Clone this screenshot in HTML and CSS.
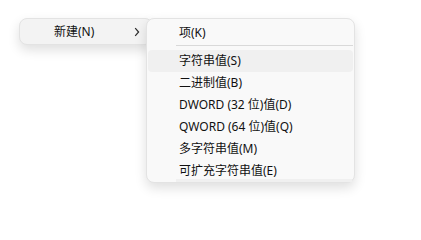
FILE: index.html
```html
<!DOCTYPE html>
<html lang="zh-CN">
<head>
<meta charset="utf-8">
<link rel="stylesheet" href="styles.css">
</head>
<body>
<div class="stage">
  <div class="menu main">
    <div class="main-item">
      <span class="label">新建(N)</span>
      <svg class="chev" width="6" height="10" viewBox="0 0 6 10"><path d="M1.2 1.2 L4.6 5 L1.2 8.8" fill="none" stroke="#2b2b2b" stroke-width="1.2"/></svg>
    </div>
    <div class="menu sub">
      <div class="item">项(K)</div>
      <div class="sep"></div>
      <div class="item hover">字符串值(S)</div>
      <div class="item">二进制值(B)</div>
      <div class="item">DWORD (32 位)值(D)</div>
      <div class="item">QWORD (64 位)值(Q)</div>
      <div class="item">多字符串值(M)</div>
      <div class="item">可扩充字符串值(E)</div>
      <div class="fade"></div>
    </div>
  </div>
</div>
</body>
</html>
```
FILE: styles.css
```css
html, body {
  margin: 0;
  padding: 0;
  background: #ffffff;
}
body {
  width: 421px;
  height: 202px;
  overflow: hidden;
  font-family: "Noto Sans", "Noto Sans CJK SC", sans-serif;
  font-size: 12px;
  color: #111111;
}
.stage {
  padding: 18px 0 0 19px;
}
.menu {
  box-sizing: border-box;
  border: 1px solid #e3e3e3;
  border-radius: 8px;
  box-shadow: 0 5px 12px rgba(0, 0, 0, 0.13);
}
.main {
  position: relative;
  width: 134px;
  height: 27px;
  background: #f3f3f3;
}
.main-item {
  display: flex;
  align-items: center;
  height: 25px;
  padding-left: 34px;
  padding-right: 0;
}
.main-item .label {
  flex: 1;
  line-height: 25px;
}
.chev {
  display: block;
  margin-left: auto;
  margin-right: 12px;
}
.sub {
  position: absolute;
  left: 126px;
  top: -1px;
  width: 209px;
  height: 165px;
  background: #f9f9f9;
  padding: 3px 1px 0 1px;
  display: flex;
  flex-direction: column;
}
.item {
  height: 22px;
  line-height: 22px;
  padding-left: 31px;
  border-radius: 4px;
  white-space: nowrap;
}
.item.hover {
  background: #f0f0f0;
}
.sep {
  height: 1px;
  background: #d9d9d9;
  margin: 1px 0 4px 28px;
}
.fade {
  height: 3px;
  margin: -3px 1px 0 28px;
  background: #f0f0f0;
}
```
